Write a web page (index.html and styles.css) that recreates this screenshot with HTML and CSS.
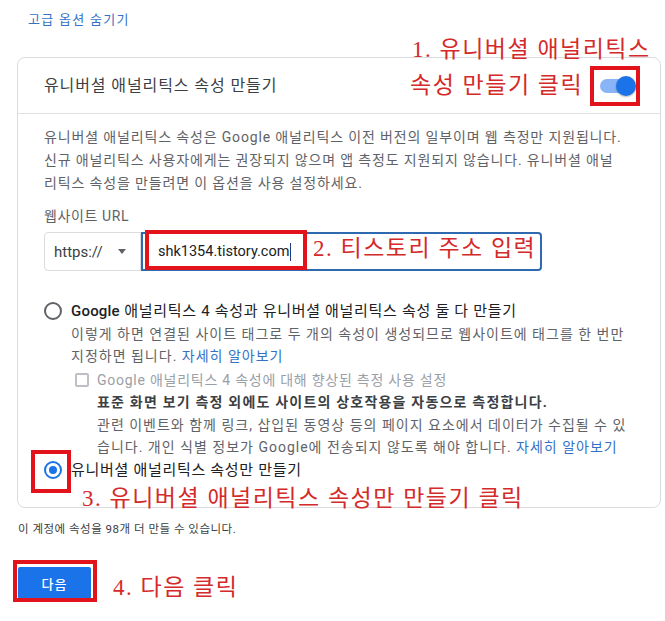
FILE: index.html
```html
<!DOCTYPE html>
<html>
<head>
  <meta charset="utf-8">
  <title>속성 만들기</title>
  <link rel="stylesheet" href="styles.css">
</head>
<body>
  <div class="page">
    <a class="adv-link" href="#">고급 옵션 숨기기</a>

    <div class="card">
      <div class="card-head">
        <span>유니버셜 애널리틱스 속성 만들기</span>
        <div class="switch"><span class="track"></span><span class="knob"></span></div>
      </div>

      <div class="card-body">
        <p class="desc">
          유니버셜 애널리틱스 속성은 Google 애널리틱스 이전 버전의 일부이며 웹 측정만 지원됩니다.<br>
          신규 애널리틱스 사용자에게는 권장되지 않으며 앱 측정도 지원되지 않습니다. 유니버셜 애널<br>
          리틱스 속성을 만들려면 이 옵션을 사용 설정하세요.
        </p>

        <div class="field-label">웹사이트 URL</div>
        <div class="url-row">
          <div class="protocol">https://<span class="caret"></span></div>
          <div class="url-input">shk1354.tistory.com<span class="cursor"></span></div>
        </div>

        <div class="option">
          <span class="radio"></span>
          <div>
            <div class="opt-label"><b>Google</b> 애널리틱스 4 속성과 유니버셜 애널리틱스 속성 둘 다 만들기</div>
            <div class="opt-sub">
              이렇게 하면 연결된 사이트 태그로 두 개의 속성이 생성되므로 웹사이트에 태그를 한 번만<br>
              지정하면 됩니다. <a class="link" href="#">자세히 알아보기</a>
            </div>
            <div class="sub-option">
              <span class="checkbox"></span>
              <div>
                <div class="check-label">Google 애널리틱스 4 속성에 대해 향상된 측정 사용 설정</div>
                <div class="check-title">표준 화면 보기 측정 외에도 사이트의 상호작용을 자동으로 측정합니다.</div>
                <div class="opt-sub">
                  관련 이벤트와 함께 링크, 삽입된 동영상 등의 페이지 요소에서 데이터가 수집될 수 있<br>
                  습니다. 개인 식별 정보가 Google에 전송되지 않도록 해야 합니다. <a class="link" href="#">자세히 알아보기</a>
                </div>
              </div>
            </div>
          </div>
        </div>

        <div class="option option-last">
          <span class="radio checked"></span>
          <div class="opt-label">유니버셜 애널리틱스 속성만 만들기</div>
        </div>
      </div>
    </div>

    <p class="quota">이 계정에 속성을 98개 더 만들 수 있습니다.</p>

    <button class="next-btn">다음</button>

    <!-- annotations drawn over the screenshot -->
    <div class="mark mark-toggle"></div>
    <div class="mark mark-url"></div>
    <div class="mark mark-radio"></div>
    <div class="mark mark-next"></div>

    <div class="note note-1a">1. 유니버셜 애널리틱스</div>
    <div class="note note-1b">속성 만들기 클릭</div>
    <div class="note note-2">2. 티스토리 주소 입력</div>
    <div class="note note-3">3. 유니버셜 애널리틱스 속성만 만들기 클릭</div>
    <div class="note note-4">4. 다음 클릭</div>
  </div>
</body>
</html>
```

FILE: styles.css
```css
body {
  margin: 0;
  font-family: Roboto, "Noto Sans CJK KR", sans-serif;
  color: #202124;
  background: #fff;
}

.page {
  position: relative;
  width: 665px;
  height: 621px;
  overflow: hidden;
}

.adv-link {
  display: block;
  padding: 11px 0 0 28px;
  font-size: 13px;
  line-height: 18px;
  letter-spacing: 1.3px;
  color: #3572c6;
  text-decoration: none;
}

.card {
  margin: 28px 4px 0 17px;
  border: 1px solid #dadce0;
  border-radius: 8px;
}

.card-head {
  display: flex;
  justify-content: space-between;
  align-items: center;
  height: 52px;
  padding: 0 24px 3px 26px;
  border-bottom: 1px solid #e0e0e0;
  font-size: 16px;
  letter-spacing: 0.9px;
  color: #3c4043;
}

.switch {
  position: relative;
  width: 36px;
  height: 20px;
  margin-top: 3px;
}

.track {
  position: absolute;
  left: 0;
  top: 3px;
  width: 34px;
  height: 14px;
  border-radius: 7px;
  background: #8ab4f8;
}

.knob {
  position: absolute;
  right: 0;
  top: 0;
  width: 20px;
  height: 20px;
  border-radius: 50%;
  background: #1a73e8;
  box-shadow: 0 1px 2px rgba(0, 0, 0, 0.3);
}

.card-body {
  padding: 12px 26px 26px 26px;
  white-space: nowrap;
}

.desc {
  margin: 0;
  font-size: 14px;
  line-height: 23px;
  letter-spacing: 0.85px;
  color: #5f6368;
}

.field-label {
  margin-top: 11px;
  font-size: 14px;
  line-height: 20px;
  letter-spacing: 0.6px;
  color: #5f6368;
}

.url-row {
  display: flex;
  margin-top: 6px;
  height: 39px;
}

.protocol {
  display: flex;
  align-items: center;
  width: 97px;
  box-sizing: border-box;
  padding: 0 14px 0 9px;
  border: 1px solid #dadce0;
  border-radius: 4px 0 0 4px;
  font-size: 15px;
  color: #3c4043;
}

.caret {
  margin-left: auto;
  border-left: 4.5px solid transparent;
  border-right: 4.5px solid transparent;
  border-top: 5px solid #5f6368;
}

.url-input {
  display: flex;
  align-items: center;
  width: 401px;
  box-sizing: border-box;
  padding-left: 15px;
  border: 2px solid #2f6ab0;
  border-radius: 0 4px 4px 0;
  font-size: 14.5px;
  color: #202124;
}

.cursor {
  display: inline-block;
  width: 1px;
  height: 18px;
  margin-left: 1px;
  background: #1a3e7a;
}

.option {
  display: grid;
  grid-template-columns: 27px 1fr;
  margin-top: 29px;
}

.option-last {
  margin-top: 0;
}

.radio {
  position: relative;
  width: 18px;
  height: 18px;
  margin-top: 2px;
  box-sizing: border-box;
  border: 2px solid #5f6368;
  border-radius: 50%;
}

.radio.checked {
  border-color: #1a73e8;
}

.radio.checked::after {
  content: "";
  position: absolute;
  left: 3px;
  top: 3px;
  width: 8px;
  height: 8px;
  border-radius: 50%;
  background: #1a73e8;
}

.opt-label {
  font-size: 15px;
  line-height: 22.5px;
  letter-spacing: 0.7px;
  color: #202124;
}

.opt-label b {
  font-weight: 500;
  letter-spacing: 0.2px;
}

.opt-sub {
  font-size: 14px;
  line-height: 22.5px;
  letter-spacing: 1px;
  color: #5f6368;
}

.link {
  color: #3572c6;
  text-decoration: none;
}

.sub-option {
  display: grid;
  grid-template-columns: 14px 1fr;
  column-gap: 8px;
  margin-top: 1px;
  padding-left: 4px;
}

.checkbox {
  width: 14px;
  height: 14px;
  margin-top: 4px;
  box-sizing: border-box;
  border: 2px solid #bdc1c6;
  border-radius: 2px;
}

.check-label {
  font-size: 14px;
  line-height: 22.5px;
  letter-spacing: 0.75px;
  color: #9aa0a6;
}

.check-title {
  font-size: 14px;
  line-height: 22.5px;
  letter-spacing: 1.2px;
  font-weight: 700;
  color: #3c4043;
}

.quota {
  margin: 13px 0 0 18px;
  font-size: 11.5px;
  line-height: 16px;
  letter-spacing: 0.5px;
  color: #3c4043;
}

.next-btn {
  display: block;
  margin: 30px 0 0 18px;
  width: 73px;
  height: 32px;
  border: none;
  border-radius: 2px;
  background: #1a73e8;
  color: #fff;
  font-family: Roboto, "Noto Sans CJK KR", sans-serif;
  font-size: 13px;
  font-weight: 500;
  letter-spacing: 1px;
}

.mark {
  position: absolute;
  box-sizing: border-box;
  border: 4px solid #e3131b;
}

.mark-toggle { left: 590px; top: 66px; width: 50px; height: 40px; }
.mark-url    { left: 145px; top: 230px; width: 162px; height: 40px; }
.mark-radio  { left: 31px;  top: 450px; width: 40px;  height: 43px; }
.mark-next   { left: 13px;  top: 560px; width: 84px;  height: 42px; }

.note {
  position: absolute;
  font-family: "Liberation Serif", "Noto Sans CJK KR", serif;
  font-size: 23px;
  line-height: 28px;
  letter-spacing: 1.5px;
  color: #d42a2a;
  white-space: nowrap;
}

.note-1a { left: 412px; top: 36px; }
.note-1b { left: 410px; top: 72px; }
.note-2  { left: 313px; top: 235px; }
.note-3  { left: 82px;  top: 485px; }
.note-4  { left: 113px; top: 574px; }
```
